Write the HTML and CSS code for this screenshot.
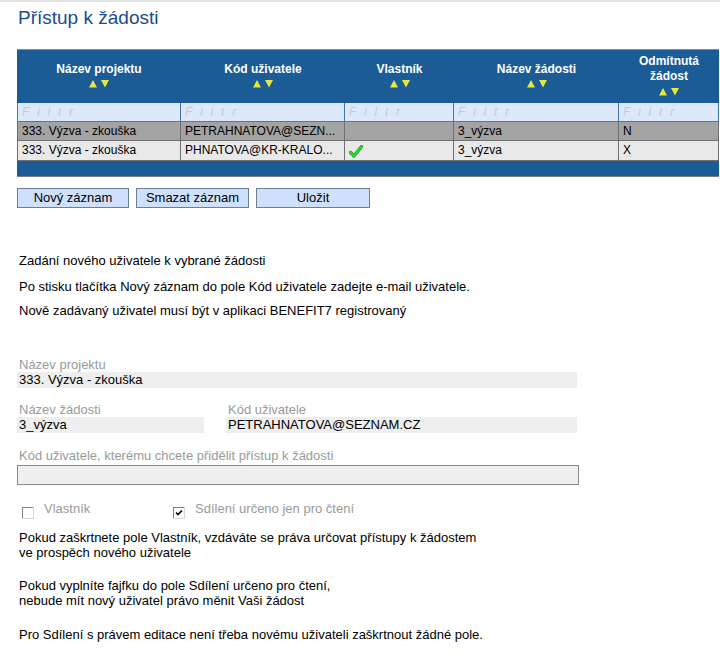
FILE: index.html
```html
<!DOCTYPE html>
<html lang="cs">
<head>
<meta charset="utf-8">
<title>Přístup k žádosti</title>
<link rel="stylesheet" href="styles.css">
</head>
<body>
<div class="topbar"></div>
<h1 class="title">Přístup k žádosti</h1>

<table class="grid">
  <colgroup>
    <col class="c1"><col class="c2"><col class="c3"><col class="c4"><col class="c5">
  </colgroup>
  <thead>
    <tr>
      <th><div class="hcell"><span class="hlabel">Název projektu</span><span class="sort"><svg width="20" height="8" viewBox="0 0 20 8"><polygon points="0,7.5 4,0 8,7.5" /><polygon points="12,0 20,0 16,7.5" /></svg></span></div></th>
      <th><div class="hcell"><span class="hlabel">Kód uživatele</span><span class="sort"><svg width="20" height="8" viewBox="0 0 20 8"><polygon points="0,7.5 4,0 8,7.5" /><polygon points="12,0 20,0 16,7.5" /></svg></span></div></th>
      <th><div class="hcell"><span class="hlabel">Vlastník</span><span class="sort"><svg width="20" height="8" viewBox="0 0 20 8"><polygon points="0,7.5 4,0 8,7.5" /><polygon points="12,0 20,0 16,7.5" /></svg></span></div></th>
      <th><div class="hcell"><span class="hlabel">Název žádosti</span><span class="sort"><svg width="20" height="8" viewBox="0 0 20 8"><polygon points="0,7.5 4,0 8,7.5" /><polygon points="12,0 20,0 16,7.5" /></svg></span></div></th>
      <th><div class="hcell"><span class="hlabel">Odmítnutá<br>žádost</span><span class="sort"><svg width="20" height="8" viewBox="0 0 20 8"><polygon points="0,7.5 4,0 8,7.5" /><polygon points="12,0 20,0 16,7.5" /></svg></span></div></th>
    </tr>
  </thead>
  <tbody>
    <tr class="filter">
      <td>Filtr</td><td>Filtr</td><td>Filtr</td><td>Filtr</td><td>Filtr</td>
    </tr>
    <tr class="row selected">
      <td>333. Výzva - zkouška</td>
      <td>PETRAHNATOVA@SEZN...</td>
      <td></td>
      <td>3_výzva</td>
      <td>N</td>
    </tr>
    <tr class="row">
      <td>333. Výzva - zkouška</td>
      <td>PHNATOVA@KR-KRALO...</td>
      <td><svg class="tick" width="14" height="13" viewBox="0 0 14 13"><path d="M1.5 7.5 L5 11 L12.5 1.5" fill="none" stroke="#169a16" stroke-width="3.2" stroke-linecap="round" stroke-linejoin="round"/><path d="M1.5 7.5 L5 11 L12.5 1.5" fill="none" stroke="#2ee02e" stroke-width="1.8" stroke-linecap="round" stroke-linejoin="round"/></svg></td>
      <td>3_výzva</td>
      <td>X</td>
    </tr>
  </tbody>
  <tfoot>
    <tr><td colspan="5"></td></tr>
  </tfoot>
</table>

<div class="buttons">
  <button class="btn b1">Nový záznam</button>
  <button class="btn b2">Smazat záznam</button>
  <button class="btn b3">Uložit</button>
</div>

<div class="info">
  <p class="i1">Zadání nového uživatele k vybrané žádosti</p>
  <p class="i2">Po stisku tlačítka Nový záznam do pole Kód uživatele zadejte e-mail uživatele.</p>
  <p class="i3">Nově zadávaný uživatel musí být v aplikaci BENEFIT7 registrovaný</p>
</div>

<div class="form">
  <div class="field f1">
    <div class="label">Název projektu</div>
    <div class="value wide">333. Výzva - zkouška</div>
  </div>
  <div class="pair">
    <div class="field col-a">
      <div class="label">Název žádosti</div>
      <div class="value">3_výzva</div>
    </div>
    <div class="field col-b">
      <div class="label">Kód uživatele</div>
      <div class="value">PETRAHNATOVA@SEZNAM.CZ</div>
    </div>
  </div>
  <div class="field f3">
    <div class="label">Kód uživatele, kterému chcete přidělit přístup k žádosti</div>
    <div class="input"></div>
  </div>
  <div class="checks">
    <div class="check ch1">
      <svg class="box" width="12" height="12" viewBox="0 0 12 12"><rect x="0" y="0" width="12" height="12" fill="#d8d8d8"/><rect x="0" y="0" width="11" height="11" fill="#808080"/><rect x="1" y="1" width="10" height="10" fill="#ffffff"/></svg>
      <span class="clabel">Vlastník</span>
    </div>
    <div class="check ch2">
      <svg class="box" width="12" height="12" viewBox="0 0 12 12"><rect x="0" y="0" width="12" height="12" fill="#d8d8d8"/><rect x="0" y="0" width="11" height="11" fill="#808080"/><rect x="1" y="1" width="10" height="10" fill="#ffffff"/><path d="M3 5.5 L5 7.5 L9 3.5" fill="none" stroke="#000" stroke-width="1.6"/></svg>
      <span class="clabel">Sdílení určeno jen pro čtení</span>
    </div>
  </div>
  <p class="note n1">Pokud zaškrtnete pole Vlastník, vzdáváte se práva určovat přístupy k žádostem<br>ve prospěch nového uživatele</p>
  <p class="note n2">Pokud vyplníte fajfku do pole Sdílení určeno pro čtení,<br>nebude mít nový uživatel právo měnit Vaši žádost</p>
  <p class="note n3">Pro Sdílení s právem editace není třeba novému uživateli zaškrtnout žádné pole.</p>
</div>
</body>
</html>
```
FILE: styles.css
```css
html, body {
  margin: 0;
  padding: 0;
  background: #ffffff;
}
body {
  font-family: "Liberation Sans", Arial, sans-serif;
  font-size: 12px;
  color: #000;
}
.topbar {
  height: 2px;
  background: #e2e2e2;
}
.title {
  margin: 0;
  padding: 5px 0 0 18px;
  font-size: 19px;
  line-height: 22px;
  font-weight: normal;
  color: #1c4d8c;
}

/* grid */
.grid {
  margin: 20px 0 0 17px;
  width: 702px;
  table-layout: fixed;
  border-collapse: separate;
  border-spacing: 0;
}
.c1 { width: 164px; }
.c2 { width: 164px; }
.c3 { width: 109px; }
.c4 { width: 165px; }
.c5 { width: 100px; }

.grid th {
  padding: 0;
  background: #1b5c97;
  border-top: 1px solid #838c96;
  color: #fff;
  font-weight: bold;
  font-size: 12px;
}
.hcell {
  height: 53px;
  display: flex;
  flex-direction: column;
  justify-content: center;
  align-items: center;
}
.hlabel {
  line-height: 15px;
  text-align: center;
}
.sort {
  height: 15px;
  display: flex;
  align-items: center;
}
.sort svg { display: block; fill: #e6e83c; }

.grid td {
  padding: 0 4px;
  white-space: nowrap;
  overflow: hidden;
  border-right: 1px solid #707070;
  border-bottom: 1px solid #707070;
  line-height: 18px;
}
.grid tbody td:first-child {
  border-left: 1px solid #707070;
}
.filter td {
  background: #dde9fb;
  color: #c6ccd4;
  font-style: italic;
  letter-spacing: 7.8px;
  border-right-color: #3f74ae;
}
.row td { background: #e9e9e9; }
.row.selected td { background: #a3a3a3; }
.row + .row td { line-height: 19px; }
.tick { display: block; margin-top: 1px; }

.grid tfoot td {
  height: 15px;
  padding: 0;
  line-height: 15px;
  background: #1b5c97;
  border-right: none;
  border-bottom: 1px solid #7a7f86;
}

/* buttons */
.buttons {
  display: flex;
  gap: 7px;
  margin: 11px 0 0 17px;
}
.btn {
  height: 20px;
  box-sizing: border-box;
  padding: 0;
  margin: 0;
  background: #cfe0fd;
  border: 1px solid #6f7e90;
  border-radius: 0;
  font-family: "Liberation Sans", Arial, sans-serif;
  font-size: 13px;
  line-height: 18px;
  color: #000;
}
.b1 { width: 112px; }
.b2 { width: 113px; }
.b3 { width: 114px; }

/* info */
.info {
  margin: 46px 0 0 19px;
  font-size: 13px;
}
.info p {
  margin: 0;
  line-height: 14px;
}
.info .i2 { margin-top: 12px; }
.info .i3 { margin-top: 10px; }

/* form */
.form {
  margin: 39px 0 0 17px;
  width: 562px;
  font-size: 13px;
}
.label {
  line-height: 15px;
  padding-left: 2px;
  color: #9a9a9a;
}
.value {
  height: 16px;
  line-height: 16px;
  padding-left: 2px;
  background: #eeeeee;
  white-space: nowrap;
}
.value.wide { width: 558px; }
.pair {
  display: flex;
  gap: 22px;
  margin-top: 14px;
}
.col-a { width: 187px; }
.col-b { width: 351px; }
.f3 { margin-top: 15px; }
.input {
  margin-top: 2px;
  height: 20px;
  box-sizing: border-box;
  width: 562px;
  border: 1px solid #8a8a8a;
  background: #efefef;
}
.checks {
  display: flex;
  margin-top: 16px;
  height: 15px;
}
.check {
  display: flex;
  align-items: flex-start;
}
.ch1 { width: 151px; }
.box {
  display: block;
  margin: 6px 10px 0 5px;
  flex: none;
}
.clabel {
  line-height: 15px;
  color: #9a9a9a;
}
.note {
  margin: 0;
  padding-left: 2px;
  line-height: 15px;
}
.n1 { margin-top: 14px; }
.n2 { margin-top: 18px; }
.n3 { margin-top: 19px; }
```
